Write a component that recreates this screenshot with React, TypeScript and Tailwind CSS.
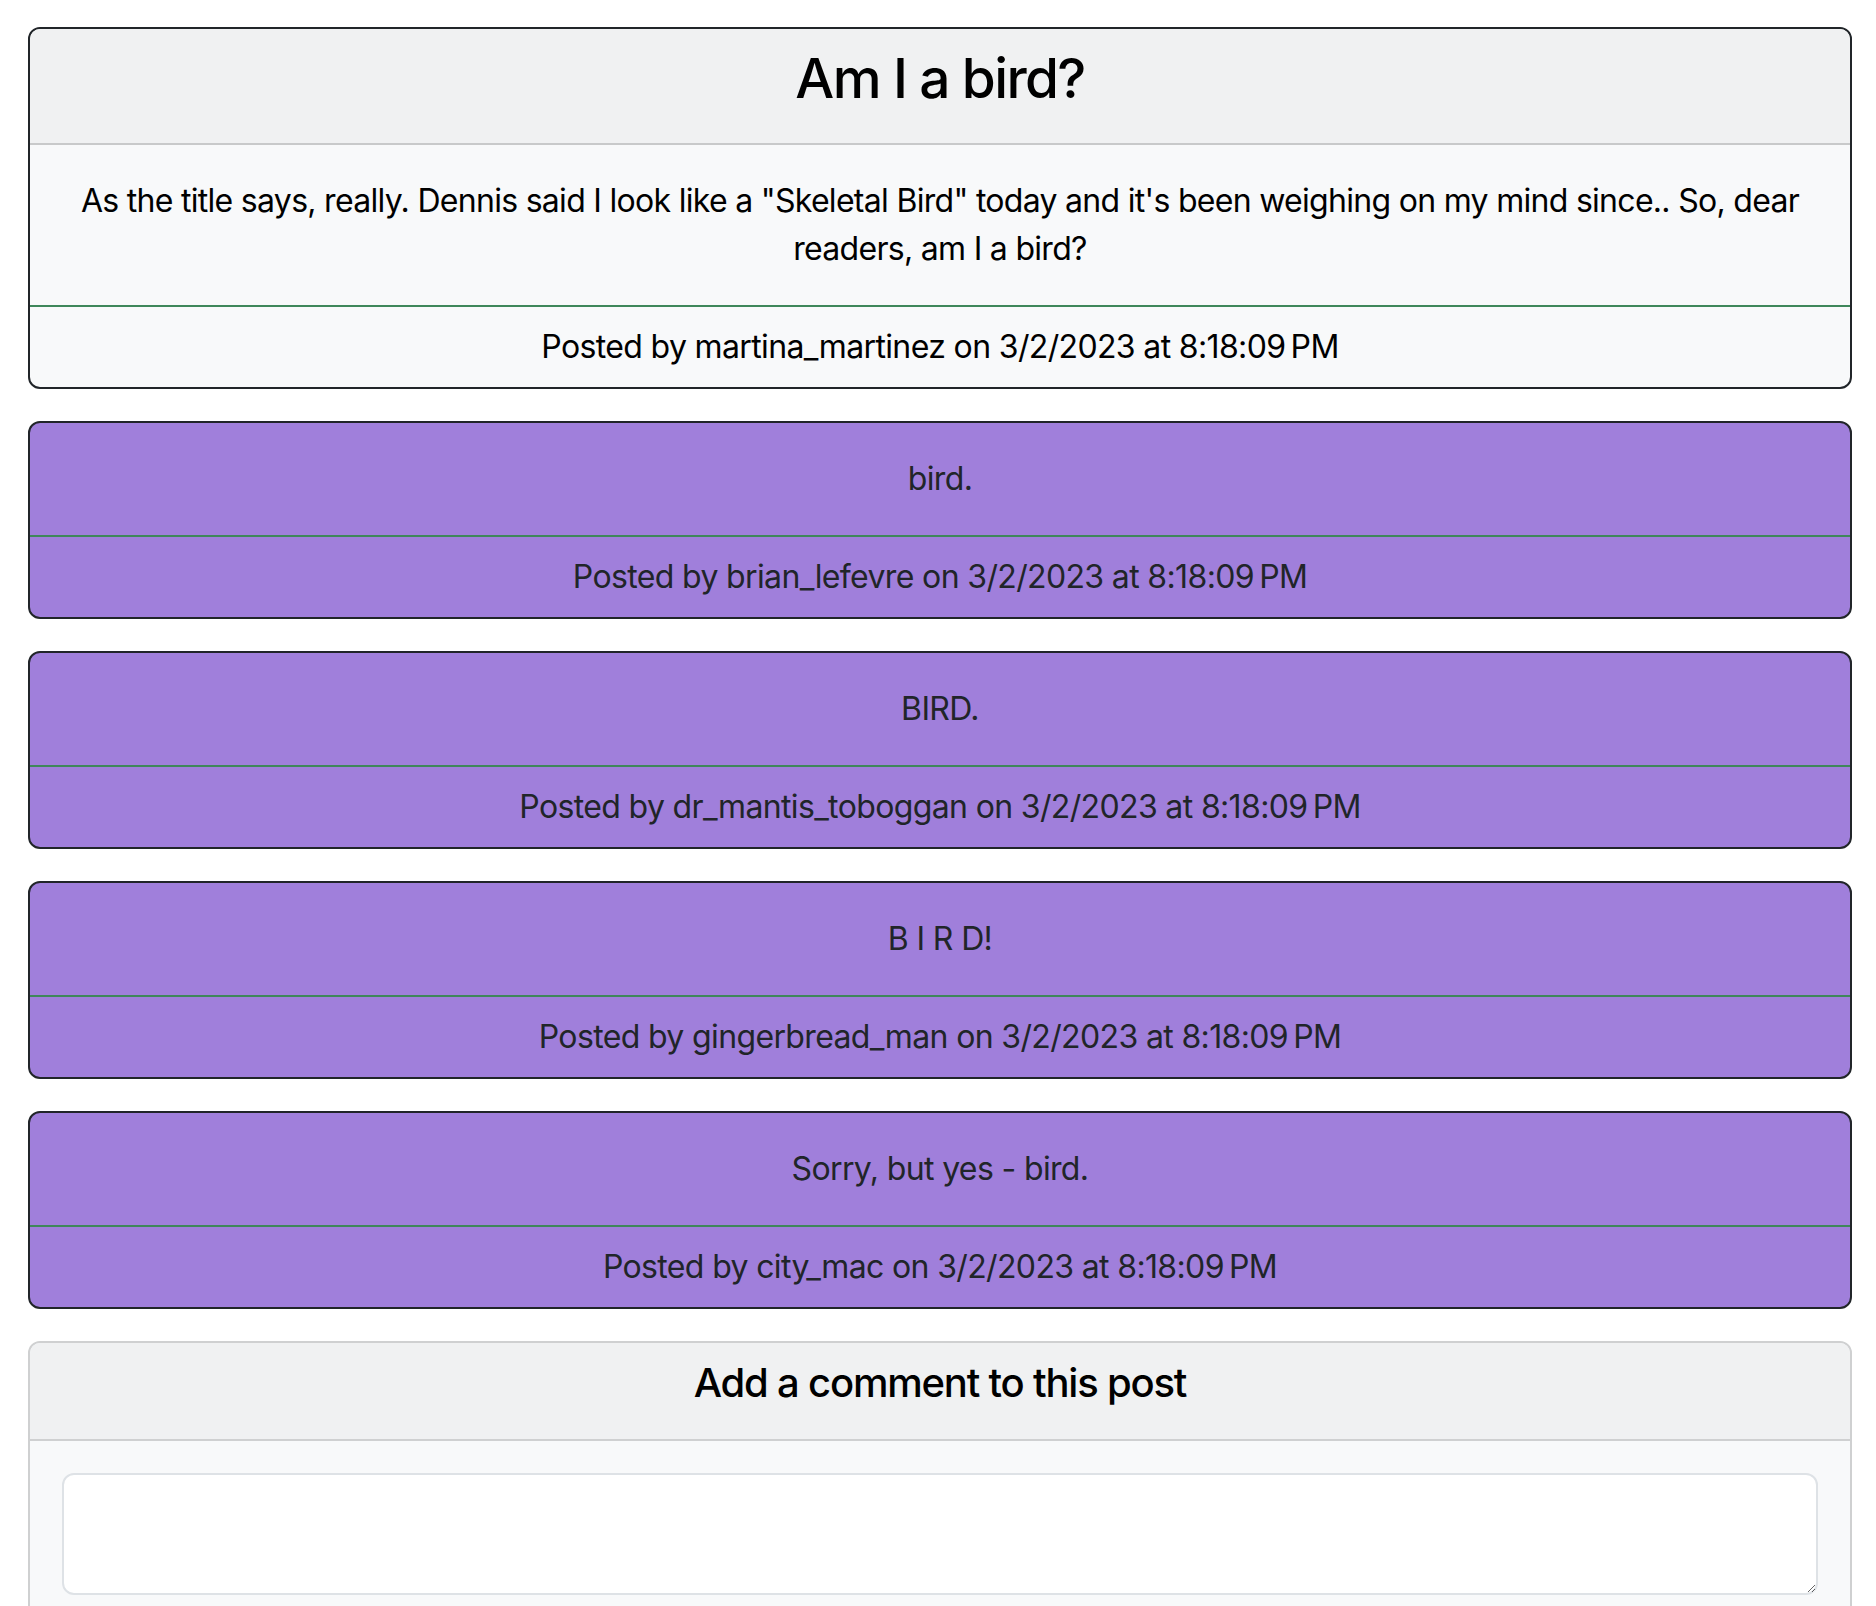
import React from "react";

const comments = [
  { text: "bird.", user: "brian_lefevre" },
  { text: "BIRD.", user: "dr_mantis_toboggan" },
  { text: "B I R D!", user: "gingerbread_man" },
  { text: "Sorry, but yes - bird.", user: "city_mac" },
];

const stamp = "on 3/2/2023 at 8:18:09\u202FPM";

export default function App() {
  return (
    <div
      className="min-h-screen bg-white pt-[27px] pl-[28px] pr-[24px] pb-8"
      style={{ fontFamily: "Inter, 'Noto Sans', 'Liberation Sans', sans-serif" }}
    >
      <div className="flex flex-col gap-8">
        <div className="border-2 border-[#212529] rounded-[12px] overflow-hidden bg-[#f8f9fa] text-center text-black">
          <div className="bg-[#f0f1f2] border-b-2 border-[#c8c9ca] px-8 pt-[16px] pb-[32px]">
            <h2 className="text-[55px] leading-[66px] font-medium tracking-[-0.03em]">Am I a bird?</h2>
          </div>
          <div className="px-8 py-8 text-[32px] leading-[48px] tracking-[-0.022em]">
            As the title says, really. Dennis said I look like a "Skeletal Bird" today and it's been weighing on my mind since.. So, dear readers, am I a bird?
          </div>
          <div className="border-t-2 border-[#3f875a] px-8 py-4 text-[32px] leading-[48px] tracking-[-0.02em]">
            Posted by martina_martinez {stamp}
          </div>
        </div>

        {comments.map((c) => (
          <div
            key={c.user}
            className="border-2 border-[#212529] rounded-[12px] overflow-hidden bg-[#a07fdb] text-center text-[#212529]"
          >
            <div className="px-8 py-8 text-[32px] leading-[48px] tracking-[-0.02em]">{c.text}</div>
            <div className="border-t-2 border-[#3f875a] px-8 py-4 text-[32px] leading-[48px] tracking-[-0.02em]">
              Posted by {c.user} {stamp}
            </div>
          </div>
        ))}

        <div className="border-2 border-[#cfd0d1] rounded-[12px] overflow-hidden bg-[#f8f9fa] text-center text-black">
          <div className="bg-[#f0f1f2] border-b-2 border-[#cfd0d1] px-8 pt-[16px] pb-[32px]">
            <h5 className="text-[40px] leading-[48px] font-medium tracking-[-0.03em]">Add a comment to this post</h5>
          </div>
          <div className="p-8">
            <textarea
              rows={2}
              className="block w-full h-[122px] border-2 border-[#dee2e6] rounded-[12px] bg-white px-6 py-3 text-[32px] leading-[48px] outline-none"
            />
          </div>
        </div>
      </div>
    </div>
  );
}
